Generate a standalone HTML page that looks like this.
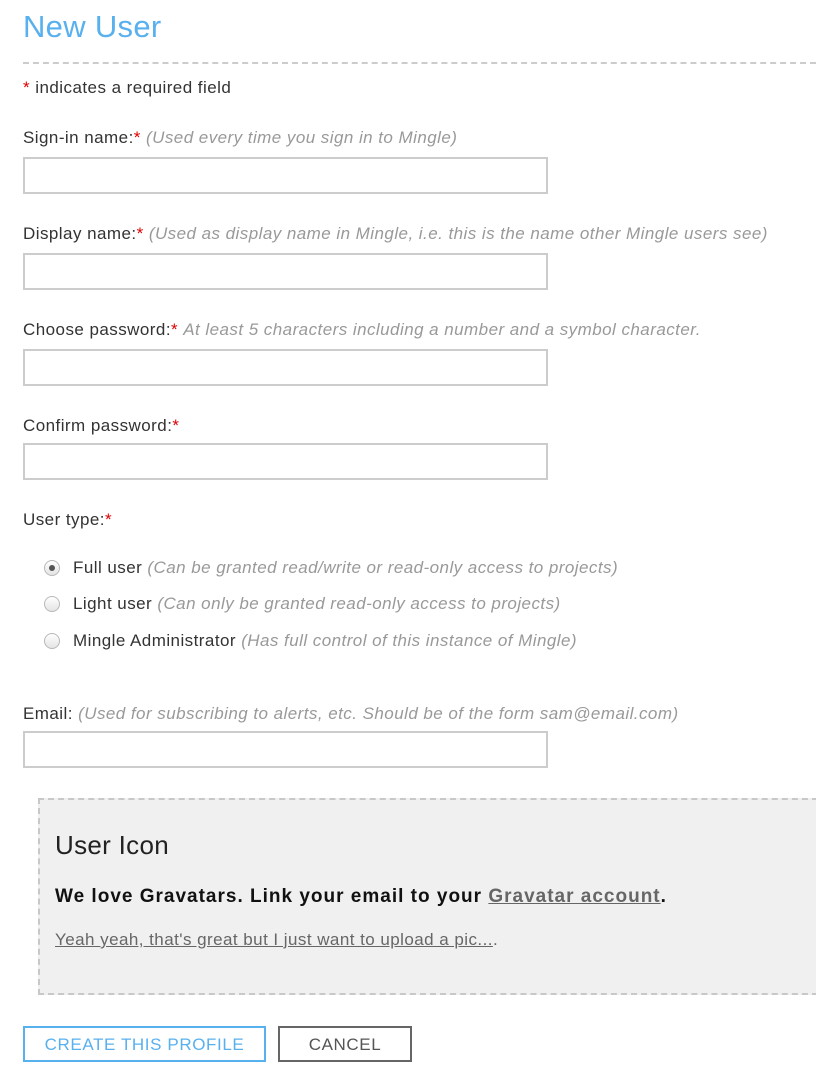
<!DOCTYPE html>
<html><head><style>
body{margin:0;width:816px;height:1082px;background:#fff;font-family:"Liberation Sans",sans-serif;color:#333;position:relative;overflow:hidden}
.a{position:absolute;white-space:nowrap;font-size:17px;line-height:20px;letter-spacing:0.45px}
.r{color:#d00}
i{color:#999}
.in{position:absolute;left:23px;width:521px;height:33px;border:2px solid #ccc;background:#fff}
.rad{position:absolute;left:44px;width:16px;height:16px;border-radius:50%;border:1px solid #b8b8b8;background:linear-gradient(#fff,#e4e4e4);box-sizing:border-box}
.btn{position:absolute;top:1026px;height:36px;box-sizing:border-box;font-size:17px;letter-spacing:0.6px;text-align:center;line-height:33px}
</style></head><body>
<div class="a" style="left:23px;top:10px;font-size:31px;line-height:34px;color:#59b0ef;letter-spacing:0.3px">New User</div>
<div style="position:absolute;left:23px;right:0;top:62px;border-top:2px dashed #ccc"></div>
<div class="a" style="left:23px;top:78px"><span class="r">*</span> indicates a required field</div>
<div class="a" style="left:23px;top:128px">Sign-in name:<span class="r">*</span> <i>(Used every time you sign in to Mingle)</i></div>
<div class="in" style="top:157px"></div>
<div class="a" style="left:23px;top:224px">Display name:<span class="r">*</span> <i>(Used as display name in Mingle, i.e. this is the name other Mingle users see)</i></div>
<div class="in" style="top:253px"></div>
<div class="a" style="left:23px;top:320px">Choose password:<span class="r">*</span> <i>At least 5 characters including a number and a symbol character.</i></div>
<div class="in" style="top:349px"></div>
<div class="a" style="left:23px;top:416px">Confirm password:<span class="r">*</span></div>
<div class="in" style="top:443px"></div>
<div class="a" style="left:23px;top:510px">User type:<span class="r">*</span></div>
<div class="rad" style="top:560px"><div style="position:absolute;left:4px;top:4px;width:6px;height:6px;border-radius:50%;background:#555"></div></div>
<div class="a" style="left:73px;top:558px">Full user <i>(Can be granted read/write or read-only access to projects)</i></div>
<div class="rad" style="top:596px"></div>
<div class="a" style="left:73px;top:594px">Light user <i>(Can only be granted read-only access to projects)</i></div>
<div class="rad" style="top:633px"></div>
<div class="a" style="left:73px;top:631px">Mingle Administrator <i>(Has full control of this instance of Mingle)</i></div>
<div class="a" style="left:23px;top:704px">Email: <i>(Used for subscribing to alerts, etc. Should be of the form sam@email.com)</i></div>
<div class="in" style="top:731px"></div>
<div style="position:absolute;left:38px;top:798px;width:790px;height:197px;box-sizing:border-box;background:#f0f0f0;border:2px dashed #c8c8c8"></div>
<div class="a" style="left:55px;top:829px;font-size:26px;line-height:32px;color:#222;letter-spacing:0.3px">User Icon</div>
<div class="a" style="left:55px;top:886px;font-size:19px;line-height:22px;font-weight:bold;color:#111;letter-spacing:1px">We love Gravatars. Link your email to your <u style="color:#666">Gravatar account</u>.</div>
<div class="a" style="left:55px;top:930px;color:#666"><u>Yeah yeah, that's great but I just want to upload a pic...</u>.</div>
<div class="btn" style="left:23px;width:243px;border:2px solid #59b0ef;color:#59b0ef">CREATE THIS PROFILE</div>
<div class="btn" style="left:278px;width:134px;border:2px solid #666;color:#555">CANCEL</div>
</body></html>
